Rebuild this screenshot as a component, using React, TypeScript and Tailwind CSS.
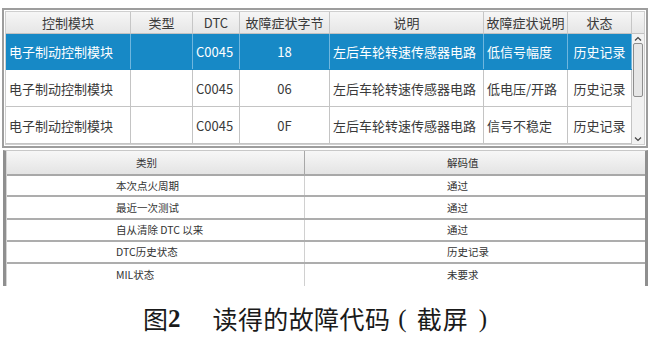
import React from "react";

const F = { fontFamily: '"Noto Sans CJK SC", "Noto Sans", sans-serif' };

const cols = [125, 62, 47, 90, 154, 84, 64];

const headers = ["控制模块", "类型", "DTC", "故障症状字节", "说明", "故障症状说明", "状态"];
const rows: string[][] = [
  ["电子制动控制模块", "", "C0045", "18", "左后车轮转速传感器电路", "低信号幅度", "历史记录"],
  ["电子制动控制模块", "", "C0045", "06", "左后车轮转速传感器电路", "低电压/开路", "历史记录"],
  ["电子制动控制模块", "", "C0045", "0F", "左后车轮转速传感器电路", "信号不稳定", "历史记录"],
];
const aligns = ["l", "l", "l", "c", "l", "l", "c"];
const heights = [36, 37, 37];

const lower: [string, string][] = [
  ["本次点火周期", "通过"],
  ["最近一次测试", "通过"],
  ["自从清除 DTC 以来", "通过"],
  ["DTC历史状态", "历史记录"],
  ["MIL状态", "未要求"],
];
const lowerH = [21, 23, 22, 22, 22];

export default function App() {
  return (
    <div className="w-[658px] h-[349px] bg-white overflow-hidden" style={F}>
      {/* top panel */}
      <div className="mt-[8px] ml-[2px] w-[646px] border-2 border-[#9d9d9d] bg-white p-px">
        <div className="flex border border-[#cfcfcf]">
          <div className="flex flex-col">
            <div className="flex h-[22px] bg-gradient-to-b from-[#f6f6f6] to-[#e6e6e6] border-b border-[#c2c2c2]">
              {headers.map((h, i) => (
                <div
                  key={i}
                  className="flex items-center justify-center text-[13px] text-[#3a3a3a] border-r border-[#c6c6c6] leading-none"
                  style={{ width: cols[i] }}
                >
                  {h}
                </div>
              ))}
            </div>
            {rows.map((r, ri) => {
              const sel = ri === 0;
              return (
                <div
                  key={ri}
                  className={
                    sel
                      ? "flex bg-[#1789c6] border-b border-[#1789c6]"
                      : "flex bg-white border-b border-[#c4c4c4]"
                  }
                  style={{ height: heights[ri] }}
                >
                  {r.map((c, ci) => (
                    <div
                      key={ci}
                      className={
                        (sel ? "text-white border-[#6fb6de] " : "text-[#3a3a3a] border-[#c4c4c4] ") +
                        "flex items-center text-[13px] border-r leading-none " +
                        (aligns[ci] === "c" ? "justify-center" : "pl-[3px]")
                      }
                      style={{ width: cols[ci] }}
                    >
                      {c}
                    </div>
                  ))}
                </div>
              );
            })}
          </div>
          <div className="flex flex-col w-[12px]">
            <div className="h-[22px] bg-gradient-to-b from-[#f6f6f6] to-[#e6e6e6] border-b border-[#c2c2c2]" />
            <div className="flex-1 bg-[#f2f2f2] flex flex-col items-center">
              <svg width="8" height="6" viewBox="0 0 8 6" className="mt-[2px]">
                <path d="M1 4.5 L4 1.5 L7 4.5" stroke="#444" strokeWidth="1.2" fill="none" />
              </svg>
              <div className="mt-[1px] w-[10px] h-[54px] rounded-[2px] border border-[#8e8e8e] bg-[#e6e6e6]" />
              <div className="flex-1" />
              <svg width="8" height="6" viewBox="0 0 8 6" className="mb-[2px]">
                <path d="M1 1.5 L4 4.5 L7 1.5" stroke="#444" strokeWidth="1.2" fill="none" />
              </svg>
            </div>
          </div>
        </div>
      </div>

      {/* bottom panel */}
      <div className="mt-[2px] ml-[3px] w-[645px] border-l-[3px] border-r-[3px] border-t border-l-[#8f8f8f] border-r-[#8f8f8f] border-t-[#c8c8c8]">
        <div className="border-l border-[#d4d4d4]">
          <div className="flex h-[25px] bg-gradient-to-b from-[#f7f7f7] to-[#e4e4e4] border-b-2 border-[#a8a8a8]">
            <div className="w-[298px] flex items-center pl-[129px] text-[10.5px] text-[#333] border-r border-[#a8a8a8]">类别</div>
            <div className="flex-1 flex items-center pl-[142px] text-[10.5px] text-[#333]">解码值</div>
          </div>
          {lower.map(([a, b], i) => (
            <div
              key={i}
              className={"flex bg-white " + (i < lower.length - 1 ? "border-b-2 border-[#adadad]" : "")}
              style={{ height: lowerH[i] }}
            >
              <div className="w-[298px] flex items-center pl-[109px] text-[10.5px] text-[#333] border-r border-[#d0d0d0]">{a}</div>
              <div className="flex-1 flex items-center pl-[142px] text-[10.5px] text-[#333]">{b}</div>
            </div>
          ))}
        </div>
      </div>

      {/* caption */}
      <div className="h-[62px] pl-[143px] pt-[2px] flex items-center text-[25px] text-[#1a1a1a] leading-none">
        <span>图</span>
        <span className="font-bold" style={{ fontFamily: '"Liberation Serif", serif' }}>2</span>
        <span className="ml-[32px] tracking-[0.4px]">读得的故障代码</span>
        <span className="ml-[8px]" style={{ fontFamily: '"Liberation Serif", serif' }}>(</span>
        <span className="ml-[10px] tracking-[1px]">截屏</span>
        <span className="ml-[10px]" style={{ fontFamily: '"Liberation Serif", serif' }}>)</span>
      </div>
    </div>
  );
}
